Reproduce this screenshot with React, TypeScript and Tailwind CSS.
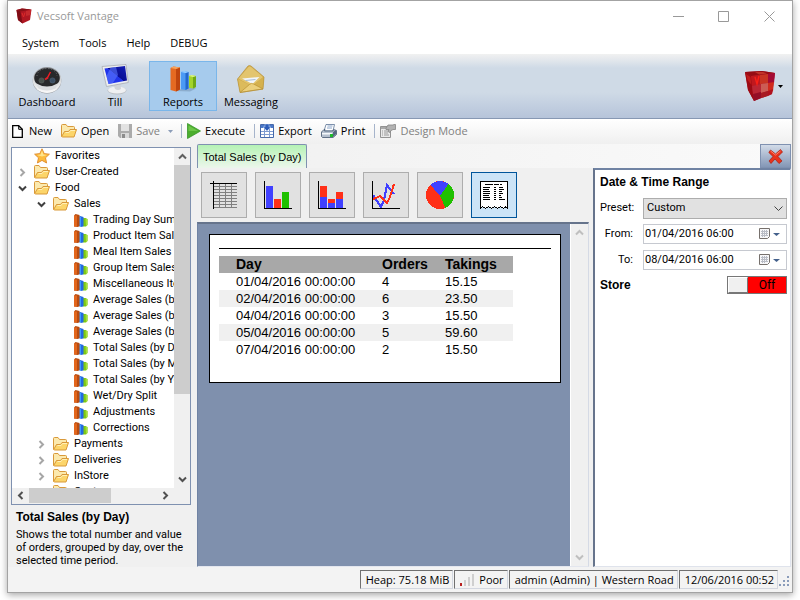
import { useState } from 'react';
import type { ReactNode } from 'react';
import { clsx } from 'clsx';

interface IconProps {
  className?: string;
}

const CubeIcon = ({ className }: IconProps) => (
  <svg className={className} viewBox="0 0 30 30" aria-hidden="true">
    <path d="M0 1 17 0 30 2 27 23 9 30 3 19Z" fill="#b01824" />
    <path d="M0 1 17 0 30 2 6 5Z" fill="#960c14" />
    <path d="M10 1h8l4 1.500-8 1z" fill="#c0342a" />
    <path d="M0 1 6 5 9 30 3 19Z" fill="#9c0a14" />
    <path d="M1 3l4.500 3 1 8-4-5z" fill="#c01c1c" />
    <path d="M6 5 15 4v9l-8 2z" fill="#c0181e" />
    <path d="M15 4l8-1v9l-8 1z" fill="#c83422" />
    <path d="M23 3l7-1-1 10-6 1z" fill="#a40a34" />
    <path d="M7 15l9-2v8l-8 3z" fill="#ba2634" />
    <path d="M16 13l7-1v8l-7 2z" fill="#cc5c54" />
    <path d="M23 12l6-1-1 9-5 2z" fill="#d02a1c" />
    <path d="M8 23l8-2v6l-7 3z" fill="#940e26" />
    <path d="M16 22l7-2v5l-7 2z" fill="#a81a22" />
    <path d="M23 20l5-2-1 5-4 2z" fill="#b0121e" />
    <path d="M10 6l2 7 2-8" fill="none" stroke="#f82018" strokeWidth="1.400" />
  </svg>
);

const BadgeIcon = () => (
  <svg className="h-4 w-4" viewBox="0 0 16 16" aria-hidden="true">
    <path d="M.5 2 6 .5 15.500 1.500 14 12 6.500 15.500 2 12Z" fill="#b01722" />
    <path d="M.5 2 4.500 3.500 6.500 15.500 2 12Z" fill="#7e0d16" />
    <path d="M.5 2 6 .5 15.500 1.500 4.500 3.500Z" fill="#8a1018" />
    <path d="M10 3l5-1-.6 5-4.400 1z" fill="#c62a2e" />
    <path d="M6 5l1.500 4L9 4.500" fill="none" stroke="#dc2a2a" />
  </svg>
);

const GaugeIcon = () => (
  <svg className="h-[30px] w-[30px]" viewBox="0 0 30 30" aria-hidden="true">
    <defs>
      <linearGradient id="gaugeRim" x1="0" y1="0" x2="0" y2="1">
        <stop offset="0" stopColor="#8b8e92" />
        <stop offset=".5" stopColor="#d8dadc" />
        <stop offset="1" stopColor="#fafafa" />
      </linearGradient>
    </defs>
    <ellipse cx="15" cy="17" rx="14.300" ry="12.500" fill="#94979c" />
    <ellipse cx="15" cy="16" rx="14.300" ry="13" fill="url(#gaugeRim)" />
    <ellipse cx="15" cy="14" rx="12.800" ry="10" fill="#28292b" />
    <path d="M5 12a10 7.500 0 0 1 20 0" fill="none" stroke="#77797c" strokeDasharray="1 2" />
    <circle cx="9.500" cy="16.500" r="2.600" fill="#48504b" stroke="#5b6360" strokeWidth=".6" />
    <circle cx="20.500" cy="16.500" r="2.600" fill="#3b4e62" stroke="#50647a" strokeWidth=".6" />
    <path d="M3.500 19q11.500 7 23 0l-3 5.500q-8.500 4-17 0z" fill="#dcdee0" />
    <path d="M15 14.500 18.500 8" stroke="#f21c24" strokeWidth="1.500" />
    <path d="M13 15.500l3-2" stroke="#e02028" strokeWidth="2" />
  </svg>
);

const MonitorIcon = () => (
  <svg className="h-[31px] w-[28px]" viewBox="0 0 28 31" aria-hidden="true">
    <defs>
      <linearGradient id="screenBlue" x1="0" y1="1" x2="1" y2="0">
        <stop offset="0" stopColor="#1c2cf0" />
        <stop offset=".5" stopColor="#2236e8" />
        <stop offset=".52" stopColor="#0a0e94" />
        <stop offset="1" stopColor="#1420b8" />
      </linearGradient>
    </defs>
    <ellipse cx="16" cy="26.500" rx="9.500" ry="4" fill="#bcc0c6" />
    <ellipse cx="16" cy="26" rx="9" ry="3.600" fill="#eff0f2" />
    <path d="M12 19l7-1 1 7q-3 2-6 0z" fill="#d0d3d8" />
    <path d="M1 2.500 25 .5 27.300 18.500 5.500 22.500Z" fill="#eceef0" stroke="#a9adb4" strokeWidth=".8" />
    <path d="M3.500 4.500 24 2 26 16.500 7.500 20Z" fill="url(#screenBlue)" />
    <path d="M9.500 3.800 15 3 17 11 12 19 7.500 20 5.500 12Z" fill="#5c78ff" opacity=".6" />
  </svg>
);

const BarsIcon = () => (
  <svg className="h-[26px] w-[26px]" viewBox="0 0 26 26" aria-hidden="true">
    <path d="M5 25l15 .5 6-3-7-2z" fill="#5b7592" opacity=".35" />
    <path d="M19 10l2.500-1 4.500 1v11l-3 1.500-4-.8z" fill="#a3d42a" />
    <path d="M23 11l3-1v11l-3 1.500z" fill="#6fa818" />
    <path d="M19 10l2.500-1 4.500 1-3 1z" fill="#dcf488" />
    <path d="M11 6l3-1 4.500 1v16.500L15.500 24 11 23.200z" fill="#4b9af5" />
    <path d="M15.500 7l3-1v16.500l-3 1.500z" fill="#2468cc" />
    <path d="M11 6l3-1 4.500 1-3 1z" fill="#9cd0ff" />
    <path d="M.5 2l3-1.500 6.500 1v22L6 25.500.5 24z" fill="#e56a22" />
    <path d="M6 3l4-1.500v22L6 25.500z" fill="#bf450e" />
    <path d="M.5 2l3-1.500 6.500 1L6 3z" fill="#f6a45e" />
  </svg>
);

const SmallBarsIcon = () => (
  <svg className="h-[13px] w-[14px] shrink-0" viewBox="0 0 14 13" aria-hidden="true">
    <path d="M8.500 4h3l2 1v6l-1.500 1.500H9z" fill="#7cc814" />
    <path d="M11.500 5l2 0v6L12 12z" fill="#a5e03c" />
    <path d="M4.500 3 6 2l3.500 1v9L8 13l-3.500-1z" fill="#2468e0" />
    <path d="M4.500 3h2.500v9.500l-2.500-.5z" fill="#3c9cff" />
    <path d="M0 1.500 1.500 0l4 1v11L4 13l-4-.5z" fill="#b84c10" />
    <path d="M0 1.500 3 1.500v11L0 12.500z" fill="#e2661c" />
  </svg>
);

const EnvelopeIcon = () => (
  <svg className="h-[28px] w-[28px]" viewBox="0 0 28 28" aria-hidden="true">
    <path d="M.5 14 11 1q1.500-1 3 0l13 11-1 12L3 27.500Z" fill="#d2ae50" />
    <path d="M1.500 13.500 11.500 2q1.500-1 3 .5L26 12l-11 9z" fill="#e3c56e" />
    <path d="M5 13.500 22.500 12l-7 7z" fill="#f2f6fb" />
    <path d="M8.500 15.500l10-1" stroke="#a5bcd8" />
    <path d="M.5 14l12 6L3 27.500Z" fill="#dcbb5c" />
    <path d="M27 12l-10 7 9 5z" fill="#d5b14e" />
    <path d="M3 27.500l9.500-8q2-2 4-.5L26 24z" fill="#ecd07c" stroke="#b38c2e" strokeWidth=".6" />
    <path d="M.5 14 11 1q1.500-1 3 0l13 11-1 12L3 27.500Z" fill="none" stroke="#b8923a" strokeWidth=".7" />
  </svg>
);

const FolderIcon = () => (
  <svg className="h-[14px] w-4 shrink-0" viewBox="0 0 16 14" aria-hidden="true">
    <path d="M.5 12.500v-11q0-1 1-1h3.500l1.500 2h6q1 0 1 1v2" fill="#fbe9ae" stroke="#d9993a" />
    <path d="M.7 12.500 3.500 7.500h4l1.500-2h6.500l-2.500 7.500H1.200z" fill="#fcd56a" stroke="#d9993a" />
    <path d="M4.500 8.500H8l1.500-2H14" fill="none" stroke="#fff0b8" />
  </svg>
);

const StarIcon = () => (
  <svg className="h-4 w-4 shrink-0" viewBox="0 0 16 16" aria-hidden="true">
    <path
      d="M8 .8 10.200 5.600 15.400 6.200 11.500 9.800 12.600 15 8 12.400 3.400 15 4.500 9.800.6 6.200 5.800 5.600Z"
      fill="#fdbb3c"
      stroke="#df8a2c"
      strokeWidth=".9"
    />
    <path d="M8 2.500 9.400 6.400l3.600.6L8 8.500 3 7l3.600-.6z" fill="#ffe48c" />
  </svg>
);

const PageIcon = () => (
  <svg className="h-[13px] w-[13px]" viewBox="0 0 13 13" aria-hidden="true">
    <path d="M.7.7h6L10.300 4.300v8H.7z" fill="#fff" stroke="#000" strokeWidth="1.300" />
    <path d="M6.700.7v3.600h3.600" fill="none" stroke="#000" />
  </svg>
);

const DiskIcon = () => (
  <svg className="h-[14px] w-[14px]" viewBox="0 0 14 14" aria-hidden="true">
    <path d="M0 0h14v14H2l-2-2z" fill="#ababab" />
    <path d="M3 0h8v7H3z" fill="#e2e2e2" />
    <path d="M3 9h8v5H3z" fill="#d8d8d8" />
    <path d="M4 10h3v4H4z" fill="#8c8c8c" />
  </svg>
);

const PlayIcon = () => (
  <svg className="h-4 w-[14px]" viewBox="0 0 14 16" aria-hidden="true">
    <path d="M.5.5 13.500 8 .5 15.500z" fill="#4cae2e" stroke="#37962a" strokeWidth=".8" />
    <path d="M1.500 2.500 11 8H1.500z" fill="#6cc548" />
  </svg>
);

const ExportIcon = () => (
  <svg className="h-[14px] w-[14px]" viewBox="0 0 14 14" aria-hidden="true">
    <path d="M.5.500h13v13H.5z" fill="#fff" stroke="#4569ab" />
    <path d="M1 1h12v3H1z" fill="#4b78c8" />
    <path d="M1 7.500h12M1 10.500h12M4.500 4v9M9.500 4v9" stroke="#7e9bd0" />
    <path d="M5 0h4v3h2L7 7 3 3h2z" fill="#2d5cb8" stroke="#c5d8f5" strokeWidth=".5" />
  </svg>
);

const PrinterIcon = () => (
  <svg className="h-[14px] w-4" viewBox="0 0 16 14" aria-hidden="true">
    <path d="M5 .5h8.500L12 7H3z" fill="#fff" stroke="#5b7395" strokeWidth=".8" />
    <path d="M6.500 2h5M6 4h5" stroke="#8aa4c8" />
    <path d="M.5 8 3 5.500h1L3.500 7H12l.6-1.500 2.900 1v4L12 13.500H1.500l-1-1z" fill="#b5c0ce" stroke="#43556e" strokeWidth=".8" />
    <path d="M1 9h10v1.500H1z" fill="#f5f8fb" />
    <path d="M9 10h3v3H9z" fill="#1eb82a" />
    <path d="M12 8l3-2v4l-3 3z" fill="#56677f" />
  </svg>
);

const DesignIcon = () => (
  <svg className="h-[14px] w-4" viewBox="0 0 16 14" aria-hidden="true">
    <path d="M.5 2.500h10v11H.5z" fill="#e9e9e9" stroke="#939393" />
    <path d="M1 3h9v2H1z" fill="#aaa" />
    <path d="M2 7h1M2 9h1M2 11h1M4 7h5M4 9h4M4 11h5" stroke="#999" />
    <path d="M6 4l2-3h5l1-.5h1.500v5h-2.500l-2 1-1 2-2-1 1-2H6z" fill="#b2b2b2" stroke="#858585" strokeWidth=".8" />
  </svg>
);

const Arrow = ({ className }: IconProps) => (
  <svg className={clsx('h-[3px] w-[5px]', className)} viewBox="0 0 5 3" preserveAspectRatio="none" aria-hidden="true">
    <path d="M0 0h5L2.500 3z" fill="currentColor" />
  </svg>
);

const Chevron = ({ className }: IconProps) => (
  <svg className={clsx('h-[9px] w-[9px]', className)} viewBox="0 0 9 9" aria-hidden="true">
    <path d="M1 2.500 4.500 6 8 2.500" fill="none" stroke="currentColor" strokeWidth="2" />
  </svg>
);

const GridChart = () => (
  <svg className="h-7 w-7" viewBox="0 0 28 28" shapeRendering="crispEdges" aria-hidden="true">
    <path
      d="M4 5.500h23M4 8.500h23M4 11.500h23M4 14.500h23M4 17.500h23M4 20.500h23M4 23.500h23M4 26.500h23M9.500 3v24M15.500 3v24M21.500 3v24"
      stroke="#808080"
    />
    <path d="M0 2.500h27M3.500 0v28" stroke="#000" />
  </svg>
);

const BarChart = () => (
  <svg className="h-7 w-7" viewBox="0 0 28 28" shapeRendering="crispEdges" aria-hidden="true">
    <path d="M2 5h7v22H2z" fill="#4040ff" />
    <path d="M10 18h7v9h-7z" fill="#ff3018" />
    <path d="M18 11h7v16h-7z" fill="#20c000" />
    <path d="M.5 0v27.500H28" fill="none" stroke="#000" />
  </svg>
);

const StackedChart = () => (
  <svg className="h-7 w-7" viewBox="0 0 28 28" shapeRendering="crispEdges" aria-hidden="true">
    <path d="M2 16h7v11H2zM10 22h7v5h-7zM18 18h7v9h-7z" fill="#4040ff" />
    <path d="M2 5h7v11H2zM10 18h7v4h-7zM18 11h7v7h-7z" fill="#ff3018" />
    <path d="M.5 0v27.500H28" fill="none" stroke="#000" />
  </svg>
);

const LineChart = () => (
  <svg className="h-7 w-7" viewBox="0 0 28 28" shapeRendering="crispEdges" aria-hidden="true">
    <path d="M1 14l4 6 4 6 3-7 3-15 3 4 4 5" fill="none" stroke="#4040ff" strokeWidth="2" />
    <path d="M1 18l3-1 4-2 3 3 4 4 3-6 4-13" fill="none" stroke="#ff3018" strokeWidth="2" />
    <path d="M.5 0v27.500H28" fill="none" stroke="#000" />
  </svg>
);

const PieChart = () => (
  <svg className="h-7 w-7" viewBox="0 0 28 28" shapeRendering="crispEdges" aria-hidden="true">
    <circle cx="14" cy="14" r="14" fill="#ff3018" />
    <path d="M14 15 4.500 4A14 14 0 0 1 22.500 2.800Z" fill="#4040ff" />
    <path d="M14 15 22.500 2.800A14 14 0 0 1 19.500 26.800Z" fill="#20c000" />
  </svg>
);

const ReceiptChart = () => (
  <svg className="h-7 w-7" viewBox="0 0 28 28" shapeRendering="crispEdges" aria-hidden="true">
    <path d="M.5 27V.5h27V27l-2-1-2 1.500-3-2-3 2-3-2-3 2-3-2-3 2-3-2z" fill="#fff" stroke="#000" />
    <path
      d="M5 3.500h8M14 3.500h5M20 3.500h2M3 6.500h7M3 8.500h6M3 10.500h7M3 12.500h7M3 14.500h6M3 16.500h7M3 18.500h7M14 6.500h2M14 8.500h2M14 10.500h2M14 12.500h2M14 14.500h2M14 16.500h2M14 18.500h2M19 6.500h4M19 8.500h5M19 10.500h3M19 12.500h4M19 14.500h2M19 16.500h3M19 18.500h6"
      stroke="#000"
    />
  </svg>
);

interface TreeNode {
  label: string;
  level: number;
  icon: 'star' | 'folder' | 'report';
  open?: boolean;
}

const reports = [
  'Trading Day Summary',
  'Product Item Sales',
  'Meal Item Sales',
  'Group Item Sales',
  'Miscellaneous Items',
  'Average Sales (by Day)',
  'Average Sales (by Month)',
  'Average Sales (by Year)',
  'Total Sales (by Day)',
  'Total Sales (by Month)',
  'Total Sales (by Year)',
  'Wet/Dry Split',
  'Adjustments',
  'Corrections'
];

const tree: TreeNode[] = [
  { label: 'Favorites', level: 0, icon: 'star' },
  { label: 'User-Created', level: 0, icon: 'folder', open: false },
  { label: 'Food', level: 0, icon: 'folder', open: true },
  { label: 'Sales', level: 1, icon: 'folder', open: true },
  ...reports.map((label): TreeNode => ({ label, level: 2, icon: 'report' })),
  { label: 'Payments', level: 1, icon: 'folder', open: false },
  { label: 'Deliveries', level: 1, icon: 'folder', open: false },
  { label: 'InStore', level: 1, icon: 'folder', open: false },
  { label: 'Customers', level: 1, icon: 'folder', open: false }
];

const indents = ['pl-[6px]', 'pl-[25px]', 'pl-[44px]'];

const sales = [
  { day: '01/04/2016 00:00:00', orders: 4, takings: '15.15' },
  { day: '02/04/2016 00:00:00', orders: 6, takings: '23.50' },
  { day: '04/04/2016 00:00:00', orders: 3, takings: '15.50' },
  { day: '05/04/2016 00:00:00', orders: 5, takings: '59.60' },
  { day: '07/04/2016 00:00:00', orders: 2, takings: '15.50' }
];

const charts = [
  { name: 'Grid', icon: <GridChart /> },
  { name: 'Bar chart', icon: <BarChart /> },
  { name: 'Stacked chart', icon: <StackedChart /> },
  { name: 'Line chart', icon: <LineChart /> },
  { name: 'Pie chart', icon: <PieChart /> },
  { name: 'Receipt', icon: <ReceiptChart /> }
];

const modules = [
  { name: 'Dashboard', icon: <GaugeIcon /> },
  { name: 'Till', icon: <MonitorIcon /> },
  { name: 'Reports', icon: <BarsIcon /> },
  { name: 'Messaging', icon: <EnvelopeIcon /> }
];

const TitleBar = () => (
  <header className="flex h-[30px] shrink-0 items-center pl-2 text-[#999]">
    <BadgeIcon />
    <span className="ml-[5px] flex-1">Vecsoft Vantage</span>
    <button aria-label="Minimise" className="flex h-full w-[46px] items-center justify-center">
      <svg className="h-[11px] w-[11px]" viewBox="0 0 11 11"><path d="M0 5.500h11" stroke="#999" /></svg>
    </button>
    <button aria-label="Maximise" className="flex h-full w-[45px] items-center justify-center">
      <svg className="h-[11px] w-[11px]" viewBox="0 0 11 11"><path d="M.5.500h10v10H.5z" fill="none" stroke="#999" /></svg>
    </button>
    <button aria-label="Close" className="flex h-full w-[46px] items-center justify-center">
      <svg className="h-[11px] w-[11px]" viewBox="0 0 11 11"><path d="M.5.500l10 10M10.500.5l-10 10" stroke="#999" /></svg>
    </button>
  </header>
);

const ToolButton = ({ icon, label, disabled }: { icon: ReactNode; label: string; disabled?: boolean }) => (
  <button disabled={disabled} className="flex h-full items-center gap-1 whitespace-nowrap disabled:text-[#808080]">
    {icon}
    {label}
  </button>
);

const Separator = () => <div className="h-[14px] w-px bg-[#a6b4cb]" />;

const ReportTree = () => (
  <div className="flex min-h-0 flex-1 flex-col border border-[#7f91b0] bg-white">
    <div className="flex min-h-0 flex-1">
      <ul className="min-w-0 flex-1 overflow-hidden">
        {tree.map((node, index) => (
          <li key={index} className={clsx('flex h-4 items-center', indents[node.level])}>
            <span className="flex w-4 shrink-0 items-center">
              {node.open !== undefined && (
                <Chevron className={node.open ? 'text-[#404040]' : '-rotate-90 text-[#a6a6a6]'} />
              )}
            </span>
            <span className="flex w-[21px] shrink-0 items-center">
              {node.icon === 'star' && <StarIcon />}
              {node.icon === 'folder' && <FolderIcon />}
              {node.icon === 'report' && <span className="pl-[2px]"><SmallBarsIcon /></span>}
            </span>
            <span className="whitespace-nowrap leading-4">{node.label}</span>
          </li>
        ))}
      </ul>
      <div className="flex w-4 shrink-0 flex-col items-center bg-[#f0f0f0]">
        <span className="flex h-[17px] items-center"><Chevron className="rotate-180 text-[#606060]" /></span>
        <span className="w-full flex-[229] bg-[#cdcdcd]" />
        <span className="flex-[77]" />
        <span className="flex h-[17px] items-center"><Chevron className="text-[#505050]" /></span>
      </div>
    </div>
    <div className="flex h-4 shrink-0 items-center bg-[#f0f0f0] pr-4 pb-px">
      <span className="flex w-[17px] justify-center"><Chevron className="rotate-90 text-[#505050]" /></span>
      <span className="h-full flex-[82] bg-[#cdcdcd]" />
      <span className="flex-[46]" />
      <span className="flex w-[17px] justify-center"><Chevron className="-rotate-90 text-[#505050]" /></span>
    </div>
  </div>
);

const DateField = ({ id, label, value }: { id: string; label: string; value: string }) => (
  <div className="flex h-[26px] items-center">
    <label htmlFor={id} className="w-[33px] shrink-0 text-right">{label}</label>
    <div className="ml-[10px] flex h-5 min-w-0 flex-1 items-center border border-[#c6c9d0] bg-white pr-[6px]">
      <input id={id} defaultValue={value} className="min-w-0 flex-1 pl-px text-[11px] outline-none" />
      <svg className="h-3 w-3 shrink-0" viewBox="0 0 12 12" aria-hidden="true">
        <path d="M.5.500h10v8l-2 2h-8z" fill="#f7f7f9" stroke="#76706c" />
        <path d="M2 3.500h7M2 5.500h7M2 7.500h7M3.500 2v7M5.500 2v7M7.500 2v6" stroke="#b9bcc5" />
      </svg>
      <Arrow className="ml-[2px] h-1 w-[7px] shrink-0 text-[#44618c]" />
    </div>
  </div>
);

const ReportSheet = () => (
  <div className="flex min-h-0 flex-1 border border-t-2 border-[#7083a3] border-t-[#66748c] border-r-[#d5dae5] border-b-[#e3e6ee] bg-[#7f90ad]">
    <div className="min-w-0 flex-1 overflow-hidden pt-[10px] pr-[9px] pl-[11px]">
      <div className="border border-black bg-white px-[9px] pt-[13px] pb-6">
        <div className="mb-[7px] h-px bg-black" />
        <table className="w-[294px] text-left text-[13px] leading-4">
          <thead className="bg-[#a8a8a8] text-[14px] leading-[17px]">
            <tr>
              <th className="w-[163px] pl-[17px]">Day</th>
              <th className="w-[63px]">Orders</th>
              <th>Takings</th>
            </tr>
          </thead>
          <tbody>
            {sales.map((row) => (
              <tr key={row.day} className="h-[17px] even:bg-[#f0f0f0]">
                <td className="pl-[17px]">{row.day}</td>
                <td>{row.orders}</td>
                <td>{row.takings}</td>
              </tr>
            ))}
          </tbody>
        </table>
      </div>
    </div>
    <div className="flex w-[18px] shrink-0 flex-col items-center justify-between border-l border-white bg-[#f0f0f0] py-1 text-[#bfbfbf]">
      <Chevron className="rotate-180" />
      <Chevron />
    </div>
  </div>
);

const FilterPanel = () => {
  const [store, setStore] = useState(false);

  return (
    <aside className="w-[198px] shrink-0 border border-t-2 border-l-2 border-[#dfe3ec] border-t-[#7083a3] border-l-[#66748c] bg-white pr-[3px] pl-[5px] font-['Roboto','Liberation_Sans',sans-serif] text-[11px]">
      <h2 className="mb-px flex h-6 items-center font-['Liberation_Sans',sans-serif] text-[12px] font-bold">Date &amp; Time Range</h2>
      <div className="flex h-[26px] items-center">
        <label htmlFor="preset" className="w-[33px] shrink-0 text-right">Preset:</label>
        <div className="relative ml-[10px] flex-1">
          <select id="preset" className="block h-[21px] w-full appearance-none border border-[#adadad] bg-[#e1e1e1] pl-[3px] text-[11px]">
            <option>Custom</option>
          </select>
          <svg className="pointer-events-none absolute top-2 right-1 h-[6px] w-[9px]" viewBox="0 0 9 6" aria-hidden="true">
            <path d="M.5.500l4 4 4-4" fill="none" stroke="#444" />
          </svg>
        </div>
      </div>
      <DateField id="from" label="From:" value="01/04/2016 06:00" />
      <DateField id="to" label="To:" value="08/04/2016 06:00" />
      <label className="flex h-6 items-center justify-between">
        <span className="font-['Liberation_Sans',sans-serif] text-[12px] font-bold">Store</span>
        <input type="checkbox" role="switch" checked={store} onChange={() => setStore(!store)} className="peer sr-only" />
        <span className="flex h-[18px] w-[60px] border border-[#777] bg-[#ff0000] peer-checked:flex-row-reverse peer-checked:bg-[#20c000]">
          <span className="w-5 border border-[#777] border-t-white border-l-white bg-[#f0f0f0]" />
          <span className="flex-1 text-center text-[12px] leading-4">{store ? 'On' : 'Off'}</span>
        </span>
      </label>
    </aside>
  );
};

const StatusCell = ({ children }: { children: ReactNode }) => (
  <div className="flex h-[19px] items-center gap-1 border border-[#d3d7e0] border-t-[#707070] border-l-[#707070] pr-[3px] pl-[5px] whitespace-nowrap">
    {children}
  </div>
);

export default function App() {
  const [module, setModule] = useState('Reports');
  const [chart, setChart] = useState('Receipt');

  return (
    <div className="h-screen bg-white px-[7px] pb-[7px]">
      <div className="flex h-full flex-col border border-[#a3a3a3] bg-white font-['Open_Sans','Noto_Sans',sans-serif] text-[11px] leading-4 text-black shadow-[0_2px_7px_rgba(0,0,0,0.35)]">
        <TitleBar />

        <nav className="flex h-[23px] shrink-0 items-center gap-5 pl-[14px]">
          {['System', 'Tools', 'Help', 'DEBUG'].map((item) => (
            <button key={item}>{item}</button>
          ))}
        </nav>

        {/* Module switcher */}
        <div className="flex h-[65px] shrink-0 items-center border-b border-[#8798b3] bg-[linear-gradient(#f1f1f1,#cfdae6_22%,#cfdae6_60%,#b6c4da)] pl-[5px]">
          {modules.map(({ name, icon }) => (
            <button
              key={name}
              onClick={() => setModule(name)}
              className={clsx(
                'flex h-[50px] w-[68px] flex-col items-center justify-between border pt-[2px]',
                module === name ? 'border-[#7ab6ea] bg-[#a6cbed]' : 'border-transparent'
              )}
            >
              <span className="flex h-[30px] items-center">{icon}</span>
              <span>{name}</span>
            </button>
          ))}
          <button aria-label="About" className="mr-[9px] ml-auto flex items-center gap-[3px]">
            <CubeIcon className="h-[30px] w-[30px]" />
            <Arrow />
          </button>
        </div>

        {/* Report actions */}
        <div className="flex h-6 shrink-0 items-center bg-linear-to-b from-white to-[#f0f0f0] pl-1">
          <ToolButton icon={<PageIcon />} label="New" />
          <span className="w-[9px]" />
          <ToolButton icon={<FolderIcon />} label="Open" />
          <span className="w-[9px]" />
          <ToolButton icon={<DiskIcon />} label="Save" disabled />
          <button aria-label="Save options" className="px-2 text-[#8c9db8]"><Arrow /></button>
          <Separator />
          <span className="w-[5px]" />
          <ToolButton icon={<PlayIcon />} label="Execute" />
          <span className="w-[9px]" />
          <Separator />
          <span className="w-[5px]" />
          <ToolButton icon={<ExportIcon />} label="Export" />
          <span className="w-[9px]" />
          <ToolButton icon={<PrinterIcon />} label="Print" />
          <span className="w-[9px]" />
          <Separator />
          <span className="w-[5px]" />
          <ToolButton icon={<DesignIcon />} label="Design Mode" disabled />
        </div>

        <main className="flex min-h-0 flex-1 bg-[#f0f0f0] pr-px pl-[3px] font-['Liberation_Sans',sans-serif]">
          <div className="flex w-[180px] shrink-0 flex-col pt-1 font-['Roboto','Liberation_Sans',sans-serif]">
            <ReportTree />
            <div className="h-[62px] shrink-0 pt-1 pl-[5px] leading-[13px]">
              <h2 className="mb-[3px] font-['Liberation_Sans',sans-serif] text-[12px] leading-4 font-bold">Total Sales (by Day)</h2>
              <p>Shows the total number and value of orders, grouped by day, over the selected time period.</p>
            </div>
          </div>

          <section className="ml-[6px] flex min-w-0 flex-1 flex-col">
            <div className="mt-px flex h-6 shrink-0 justify-between bg-linear-to-r from-[#f0f0f0] to-[#fafafa]">
              <button className="rounded-t-[2px] border border-b-0 border-[#7f91b0] bg-linear-to-b from-[#b4f2b4] to-[#ecf6ec] px-[5px]">
                Total Sales (by Day)
              </button>
              <button aria-label="Close report" className="flex w-[31px] items-center justify-center border border-[#7f91b0] bg-linear-to-b from-[#d2dbe8] to-[#8497b6]">
                <svg className="h-[15px] w-[15px]" viewBox="0 0 15 15" aria-hidden="true">
                  <path d="M2.500 1 7.500 5 12.500.5 14.500 3 10 7.500l4 4.500-3 2.500-4-4.500-4 4.500-2-2.500L5 7.500.8 3.500z" fill="#e8321c" stroke="#a81e10" strokeWidth=".7" />
                  <path d="M2.500 2 7.500 6 12.500 2" fill="none" stroke="#ff806a" />
                </svg>
              </button>
            </div>

            <div className="flex min-h-0 flex-1">
              <div className="flex min-w-0 flex-1 flex-col">
                <div className="flex shrink-0 gap-2 px-1 pt-1 pb-1">
                  {charts.map(({ name, icon }) => (
                    <button
                      key={name}
                      aria-label={name}
                      onClick={() => setChart(name)}
                      className={clsx(
                        'flex h-[46px] w-[46px] items-center justify-center border',
                        chart === name ? 'border-[#00559b] bg-[#cce4f7]' : 'border-[#adadad] bg-[#e1e1e1]'
                      )}
                    >
                      {icon}
                    </button>
                  ))}
                </div>
                <ReportSheet />
              </div>
              <div className="w-1 shrink-0" />
              <FilterPanel />
            </div>
          </section>
        </main>

        <footer className="flex h-[25px] shrink-0 items-center justify-end gap-px bg-[#f3f3f3] pr-[2px]">
          <StatusCell>Heap: 75.18 MiB</StatusCell>
          <StatusCell>
            <svg className="h-3 w-[15px]" viewBox="0 0 15 12" shapeRendering="crispEdges" aria-hidden="true">
              <path d="M0 9h2v3H0z" fill="#b82020" />
              <path d="M4 6h2v6H4zM8 3h2v9H8zM12 0h2v12h-2z" fill="#cfcfcf" />
            </svg>
            Poor
          </StatusCell>
          <StatusCell>admin (Admin) | Western Road</StatusCell>
          <StatusCell>12/06/2016 00:52</StatusCell>
          <svg className="mt-1 h-[11px] w-[11px]" viewBox="0 0 11 11" shapeRendering="crispEdges" aria-hidden="true">
            <path d="M8 0h2v2H8zM4 4h2v2H4zM8 4h2v2H8zM0 8h2v2H0zM4 8h2v2H4zM8 8h2v2H8z" fill="#8a9cba" />
          </svg>
        </footer>
      </div>
    </div>
  );
}
